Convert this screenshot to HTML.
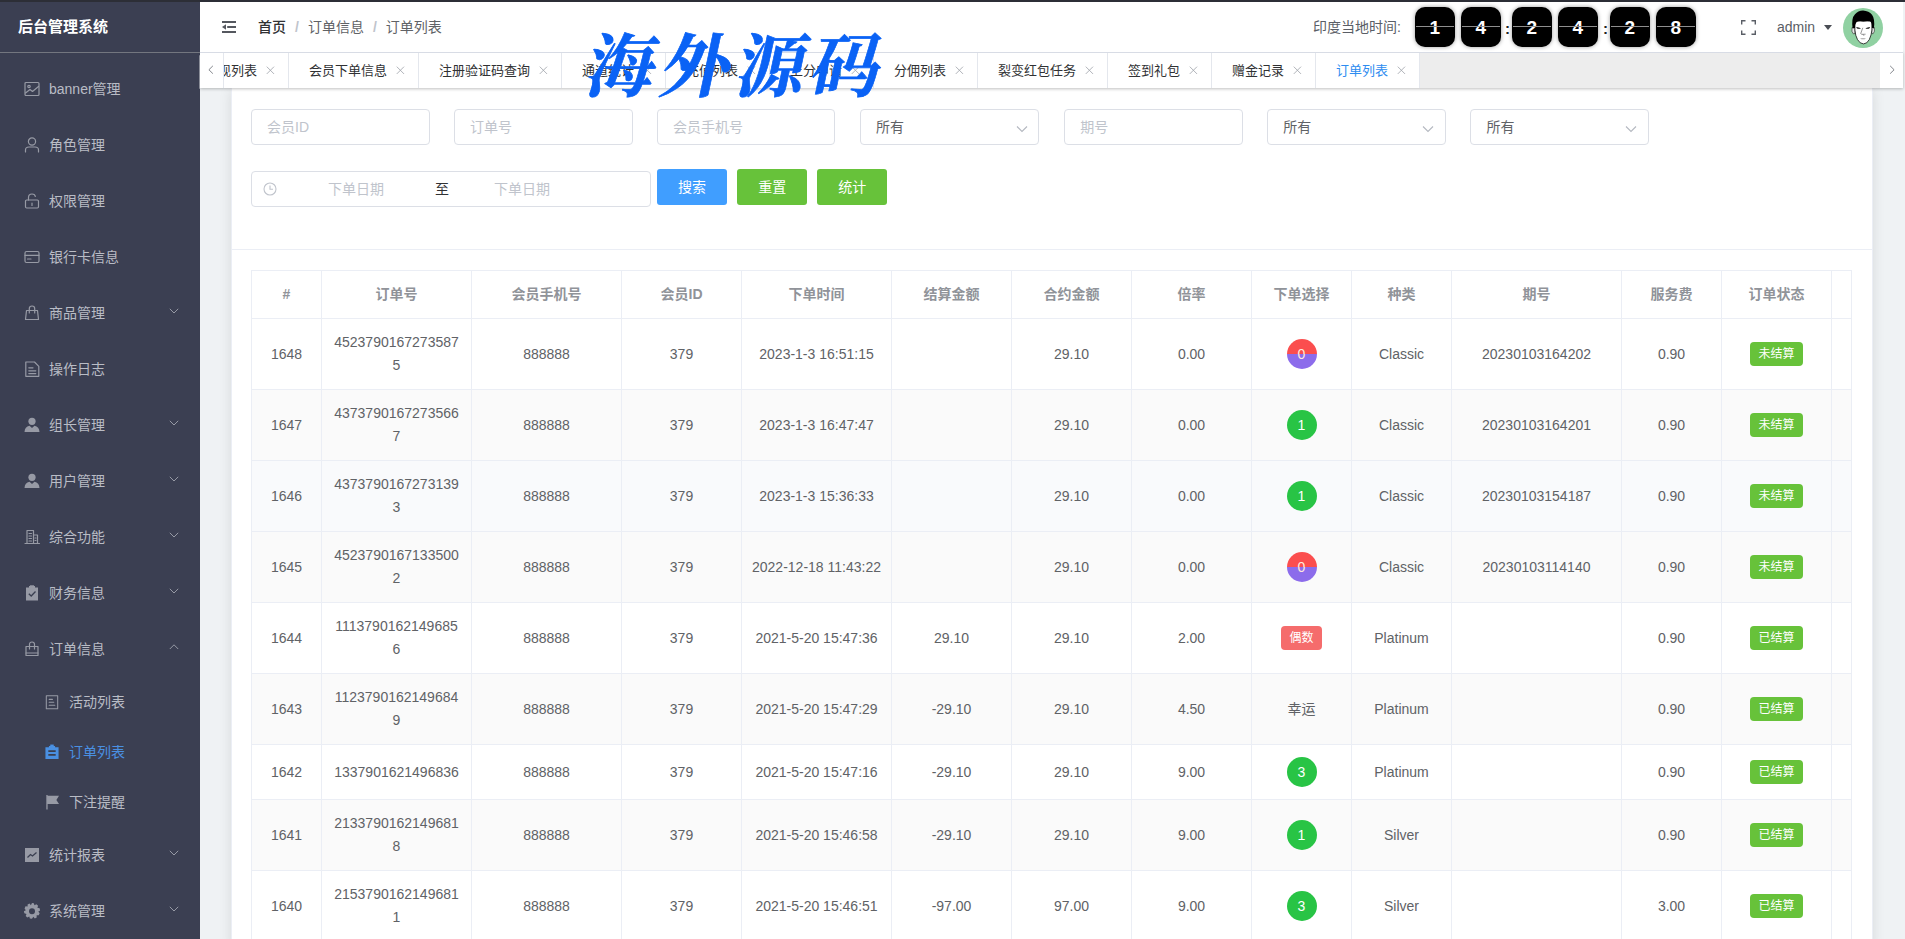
<!DOCTYPE html>
<html lang="zh-CN">
<head>
<meta charset="utf-8">
<title>后台管理系统</title>
<style>
*{box-sizing:border-box;margin:0;padding:0}
html,body{width:1905px;height:939px;overflow:hidden;background:#eff2f4;
  font-family:"Liberation Sans","Noto Sans CJK SC",sans-serif;font-size:14px;color:#606266}
.abs{position:absolute}
#topline{left:0;top:0;width:1905px;height:2px;background:#2c2e36;z-index:50}
/* sidebar */
#side{left:0;top:0;width:200px;height:939px;background:#3b3f52;z-index:10;overflow:hidden}
#logo{left:0;top:2px;width:200px;height:51px;border-bottom:1px solid #73767f;color:#fff;font-weight:bold;font-size:15px;line-height:49px;padding-left:18px}
#sthumb{left:198.5px;top:55px;width:2px;height:34px;background:#8b8e99;border-radius:1px}
.mi{position:absolute;left:0;width:200px;height:56px;line-height:56px;color:#b9bcc5;font-size:14px}
.mi .t{position:absolute;left:49px;top:0;white-space:nowrap}
.mi svg.ic{position:absolute;left:24px;top:20px;width:16px;height:16px;color:#979aa5;overflow:visible}
.mi svg.ar{position:absolute;left:169px;top:21px;width:10px;height:10px;color:#979aa5}
.mi.sub{height:50px;line-height:50px}
.mi.sub .t{left:69px}
.mi.sub svg.ic{left:45px;top:18px;width:14px;height:14px}
.mi.act{color:#4a90e2}
.mi.act svg.ic{color:#4a90e2}
/* header */
#head{left:200px;top:2px;width:1703px;height:50px;background:#fff;z-index:5}
#ham{position:absolute;left:22px;top:18.8px;width:14px;height:12px}
#bc{position:absolute;left:58px;top:0;line-height:50px;font-size:14px;white-space:nowrap;color:#606266}
#bc b{color:#303133;font-weight:500}
#bc em{font-style:normal;color:#c0c4cc;margin:0 9px;font-weight:bold}
#tl{position:absolute;left:1113px;top:0;line-height:50px;font-size:14px;color:#5a5e66;white-space:nowrap}
.dg{position:absolute;top:4.6px;width:40.5px;height:40.5px;border-radius:10px;background:#000;color:#fff;font-size:19px;font-weight:bold;text-align:center;line-height:42.5px;box-shadow:0 0 4px rgba(0,0,0,.4)}
.dg:after{content:"";position:absolute;left:1px;right:1px;top:19.4px;height:1px;background:rgba(150,150,150,.95)}
.cl{position:absolute;top:1.5px;line-height:50px;font-size:15px;font-weight:bold;color:#222;width:8px;text-align:center}
#fs{position:absolute;left:1541px;top:18px;width:15px;height:15px}
#adm{position:absolute;left:1577px;top:0;line-height:50px;font-size:14px;color:#5a5e66}
#caret{position:absolute;left:1624px;top:23px;width:0;height:0;border-left:4.5px solid transparent;border-right:4.5px solid transparent;border-top:5px solid #4a4d55}
#ava{position:absolute;left:1643px;top:6px;width:40px;height:40px}
/* tabs */
#tabs{left:200px;top:52px;width:1703px;height:36px;background:#ededed;border-top:1px solid #d8dce5;box-shadow:0 1px 3px rgba(0,0,0,.25);z-index:4;overflow:hidden}
.tab{position:absolute;top:0;height:35px;line-height:35px;background:#fff;border-right:1px solid #e4e7ed;font-size:13px;color:#303133;white-space:nowrap;padding-left:20px}
.tab svg.x{position:absolute;right:13px;top:13px;width:8.8px;height:8.6px;color:#a3a6ad}
.tab.on{color:#2d8cf0}
#tl-l{position:absolute;left:0;top:0;width:24px;height:35px;background:#fff;border-right:1px solid #e4e7ed}
#tl-l svg{position:absolute;left:8px;top:12.3px;width:6px;height:9.5px}
#tl-r{position:absolute;left:1680px;top:0;width:23px;height:35px;background:#fff}
#tl-r svg{position:absolute;left:9px;top:12.3px;width:6px;height:9.5px}
/* watermark */
#wm{position:absolute;left:588px;top:22.5px;z-index:60;color:#0a62f5;font-family:"Liberation Serif","Noto Serif CJK SC",serif;font-weight:700;font-size:69px;line-height:90px;white-space:nowrap;transform:skewX(-12deg);letter-spacing:6px;-webkit-text-stroke:0.7px #0a62f5}
/* main */
#card{left:231px;top:88px;width:1641.5px;box-shadow:0 2px 12px rgba(0,0,0,.1);height:860px;background:#fff;z-index:1;border-left:1px solid #ebeef5;border-right:1px solid #ebeef5}
.inp{position:absolute;height:36px;border:1px solid #dcdfe6;border-radius:4px;background:#fff;line-height:34px;padding-left:15px;font-size:14px;color:#c0c4cc;white-space:nowrap}
.inp.sel{color:#606266}
.inp .car{position:absolute;right:10.5px;top:13px;width:12px;height:12px}
#dr{position:absolute;left:19px;top:83px;width:400px;height:36px;border:1px solid #dcdfe6;border-radius:4px;background:#fff;font-size:14px}
#dr #clk{position:absolute;left:10.5px;top:9.5px;width:14px;height:14px}
#dr .ph{position:absolute;top:0;line-height:34px;color:#c0c4cc}
#dr .to{position:absolute;left:183px;top:0;line-height:34px;color:#303133}
.btn{position:absolute;top:81px;height:36px;width:70px;border-radius:3px;color:#fff;font-size:14px;text-align:center;line-height:36px}
#hr{position:absolute;left:0;top:161px;width:1640px;height:1px;background:#ebeef5}
/* table */
#tb{position:absolute;left:19px;top:182px;width:1601px;table-layout:fixed;border-collapse:separate;border-spacing:0;border-left:1px solid #ebeef5;border-top:1px solid #ebeef5;font-size:14px;color:#606266}
#tb th,#tb td{border-right:1px solid #ebeef5;border-bottom:1px solid #ebeef5;text-align:center;vertical-align:middle;padding:0}
#tb th{height:48px;padding-bottom:2px;color:#909399;font-weight:bold;font-size:14px;background:#fff}
#tb td{padding:12px 0}
#tb .c{padding:0 10px;line-height:23px;word-break:break-all}
#tb tr.st td{background:#fafafa}
#tb tr.hv td{background:#f9fafc}
.cir{display:block;margin:0 auto;width:30px;height:30px;border-radius:50%;color:#fff;font-size:14px;line-height:30px;text-align:center}
.cir.g{background:#28c445}
.cir.rv{background:linear-gradient(180deg,#fb4e4e 0,#fb4e4e 50%,#8c6ceb 50%,#8c6ceb 100%);color:#ffe9dc}
.tag{display:inline-block;height:24px;line-height:22px;padding:0 7.8px;border-radius:4px;font-size:12px;color:#fff;border:1px solid transparent;vertical-align:middle}
.tag.grn{background:#67c23a}
.tag.red{background:#f56c6c}

#tb th .hc{position:relative;top:-0.6px}

</style>
</head>
<body>
<div id="topline" class="abs"></div>

<div id="side" class="abs">
  <div id="logo" class="abs">后台管理系统</div>
  <div id="sthumb" class="abs"></div>
  <div class="mi" style="top:61px"><svg class="ic" viewBox="0 0 16 16" ><rect x="1" y="1.5" width="14" height="13" rx="1" fill="none" stroke="currentColor" stroke-width="1.2" stroke-linejoin="round" stroke-linecap="round"/><circle cx="5" cy="5.5" r="1.2" fill="none" stroke="currentColor" stroke-width="1.2" stroke-linejoin="round" stroke-linecap="round"/><path d="M1.5 12 L6 8.5 L8.5 10.5 L14.5 5.5" fill="none" stroke="currentColor" stroke-width="1.2" stroke-linejoin="round" stroke-linecap="round"/></svg><span class="t">banner管理</span></div>
  <div class="mi" style="top:117px"><svg class="ic" viewBox="0 0 16 16" ><circle cx="8" cy="4.5" r="3.6" fill="none" stroke="currentColor" stroke-width="1.2" stroke-linejoin="round" stroke-linecap="round"/><path d="M1.5 15 V13 Q1.5 10 5 10 H11 Q14.5 10 14.5 13 V15" fill="none" stroke="currentColor" stroke-width="1.2" stroke-linejoin="round" stroke-linecap="round"/></svg><span class="t">角色管理</span></div>
  <div class="mi" style="top:173px"><svg class="ic" viewBox="0 0 16 16" ><rect x="1.5" y="7" width="13" height="8" rx="1.2" fill="none" stroke="currentColor" stroke-width="1.2" stroke-linejoin="round" stroke-linecap="round"/><path d="M4.5 7 V4.5 Q4.5 1 8 1 Q11 1 11.3 3.5" fill="none" stroke="currentColor" stroke-width="1.2" stroke-linejoin="round" stroke-linecap="round"/><path d="M8 10 V12.5" fill="none" stroke="currentColor" stroke-width="1.2" stroke-linejoin="round" stroke-linecap="round"/></svg><span class="t">权限管理</span></div>
  <div class="mi" style="top:229px"><svg class="ic" viewBox="0 0 16 16" ><rect x="1" y="2.5" width="14" height="11" rx="1.5" fill="none" stroke="currentColor" stroke-width="1.2" stroke-linejoin="round" stroke-linecap="round"/><path d="M1 6.3 H15 M3.5 10 H7" fill="none" stroke="currentColor" stroke-width="1.2" stroke-linejoin="round" stroke-linecap="round"/></svg><span class="t">银行卡信息</span></div>
  <div class="mi" style="top:285px"><svg class="ic" viewBox="0 0 16 16" ><path d="M2.5 5.5 H13.5 L14.5 14.5 H1.5 Z" fill="none" stroke="currentColor" stroke-width="1.2" stroke-linejoin="round" stroke-linecap="round"/><path d="M5.3 8 V3.5 Q5.3 1 8 1 Q10.7 1 10.7 3.5 V8" fill="none" stroke="currentColor" stroke-width="1.2" stroke-linejoin="round" stroke-linecap="round"/></svg><span class="t">商品管理</span><svg class="ar" viewBox="0 0 10 10"><path d="M0.8 2.8 L5 7 L9.2 2.8" fill="none" stroke="currentColor" stroke-width="1"/></svg></div>
  <div class="mi" style="top:341px"><svg class="ic" viewBox="0 0 16 16" ><path d="M1.8 1 H10.5 L14.8 5.3 V15.3 H1.8 Z" fill="none" stroke="currentColor" stroke-width="1.2" stroke-linejoin="round" stroke-linecap="round"/><path d="M4.8 6.8 H9 M4.8 9.8 H11.8 M4.8 12.6 H11.8" fill="none" stroke="currentColor" stroke-width="1.2" stroke-linejoin="round" stroke-linecap="round"/></svg><span class="t">操作日志</span></div>
  <div class="mi" style="top:397px"><svg class="ic" viewBox="0 0 16 16" ><circle cx="8" cy="4.3" r="3.6" fill="currentColor"/><path d="M0.5 15 Q0.8 9.5 5.5 8.8 L8 11 L10.5 8.8 Q15.2 9.5 15.5 15 Z" fill="currentColor"/></svg><span class="t">组长管理</span><svg class="ar" viewBox="0 0 10 10"><path d="M0.8 2.8 L5 7 L9.2 2.8" fill="none" stroke="currentColor" stroke-width="1"/></svg></div>
  <div class="mi" style="top:453px"><svg class="ic" viewBox="0 0 16 16" ><circle cx="8" cy="4.3" r="3.6" fill="currentColor"/><path d="M0.5 15 Q0.8 9.5 5.5 8.8 L8 11 L10.5 8.8 Q15.2 9.5 15.5 15 Z" fill="currentColor"/></svg><span class="t">用户管理</span><svg class="ar" viewBox="0 0 10 10"><path d="M0.8 2.8 L5 7 L9.2 2.8" fill="none" stroke="currentColor" stroke-width="1"/></svg></div>
  <div class="mi" style="top:509px"><svg class="ic" viewBox="0 0 16 16" ><path d="M3 14.5 V1.5 H9.5 V14.5 M9.5 6 H13.5 V14.5 M1 14.5 H15.5" fill="none" stroke="currentColor" stroke-width="1.2" stroke-linejoin="round" stroke-linecap="round"/><path d="M5 4.5 H7.5 M5 7 H7.5 M5 9.5 H7.5 M5 12 H7.5 M11 9 H12 M11 11.5 H12" fill="none" stroke="currentColor" stroke-width="1.2" stroke-linejoin="round" stroke-linecap="round"/></svg><span class="t">综合功能</span><svg class="ar" viewBox="0 0 10 10"><path d="M0.8 2.8 L5 7 L9.2 2.8" fill="none" stroke="currentColor" stroke-width="1"/></svg></div>
  <div class="mi" style="top:565px"><svg class="ic" viewBox="0 0 16 16" ><path d="M2 2.5 H5 V1 H11 V2.5 H14 V15.5 H2 Z" fill="currentColor"/><rect x="6" y="0.3" width="4" height="2" fill="currentColor"/><path d="M4.8 8.8 L7.2 11 L11.5 6.5" fill="none" stroke="#3a3f51" stroke-width="1.3"/></svg><span class="t">财务信息</span><svg class="ar" viewBox="0 0 10 10"><path d="M0.8 2.8 L5 7 L9.2 2.8" fill="none" stroke="currentColor" stroke-width="1"/></svg></div>
  <div class="mi" style="top:621px"><svg class="ic" viewBox="0 0 16 16" ><path d="M2 5.5 H14 V14.5 H2 Z" fill="none" stroke="currentColor" stroke-width="1.2" stroke-linejoin="round" stroke-linecap="round"/><path d="M5.5 8 V3.3 Q5.5 1 8 1 Q10.5 1 10.5 3.3 V8 M2 12 H14" fill="none" stroke="currentColor" stroke-width="1.2" stroke-linejoin="round" stroke-linecap="round"/></svg><span class="t">订单信息</span><svg class="ar" viewBox="0 0 10 10"><path d="M0.8 7 L5 2.8 L9.2 7" fill="none" stroke="currentColor" stroke-width="1"/></svg></div>
  <div class="mi sub" style="top:677px"><svg class="ic" viewBox="0 0 16 16" ><path d="M1.5 0.8 H14.5 V15.8 H1.5 Z" fill="none" stroke="currentColor" stroke-width="1.2" stroke-linejoin="round" stroke-linecap="round"/><path d="M4.8 5 H8.5 M4.8 8.3 H10 M4.8 11.6 H11.2" fill="none" stroke="currentColor" stroke-width="1.2" stroke-linejoin="round" stroke-linecap="round"/></svg><span class="t">活动列表</span></div>
  <div class="mi sub act" style="top:727px"><svg class="ic" viewBox="0 0 16 16" ><path d="M0.5 2.5 H4.5 V1 H11.5 V2.5 H15.5 V16 H0.5 Z" fill="currentColor"/><rect x="6" y="-0.5" width="4" height="2.5" fill="currentColor"/><path d="M3.8 7 H12.2 M3.8 11.3 H12.2" stroke="#3a3f51" stroke-width="1.8"/></svg><span class="t">订单列表</span></div>
  <div class="mi sub" style="top:777px"><svg class="ic" viewBox="0 0 16 16" ><path d="M1.5 0 H3 V16.5 H1.5 Z M3 0.8 H16 L13 5.6 L16 10.4 H3 Z" fill="currentColor"/></svg><span class="t">下注提醒</span></div>
  <div class="mi" style="top:827px"><svg class="ic" viewBox="0 0 16 16" ><rect x="1" y="1" width="14" height="14" fill="currentColor"/><path d="M3.5 10.5 L6.5 7.5 L8.5 9 L12.5 5.5" fill="none" stroke="#3a3f51" stroke-width="1.3"/></svg><span class="t">统计报表</span><svg class="ar" viewBox="0 0 10 10"><path d="M0.8 2.8 L5 7 L9.2 2.8" fill="none" stroke="currentColor" stroke-width="1"/></svg></div>
  <div class="mi" style="top:883px"><svg class="ic" viewBox="0 0 16 16" ><path d="M8 0.8 L9.6 1 L10.2 2.8 L11.9 1.9 L13.4 3.2 L12.8 5 L14.8 5.4 L15.2 7.3 L13.6 8.3 L14.8 9.9 L14 11.7 L12.1 11.5 L12.2 13.5 L10.5 14.4 L9.2 13 L8 14.6 L6.1 14.5 L5.6 12.7 L3.8 13.5 L2.4 12.2 L3.1 10.4 L1.2 9.9 L0.8 8 L2.5 7.1 L1.4 5.5 L2.2 3.7 L4.1 3.9 L4.1 2 L5.8 1.2 L7 2.6 Z" fill="currentColor" transform="translate(-1,-0.8) scale(1.125)"/><circle cx="8" cy="8.2" r="3" fill="#3b3f52"/></svg><span class="t">系统管理</span><svg class="ar" viewBox="0 0 10 10"><path d="M0.8 2.8 L5 7 L9.2 2.8" fill="none" stroke="currentColor" stroke-width="1"/></svg></div>
</div>

<div id="head" class="abs">
  <svg id="ham" viewBox="0 0 14 12"><path d="M0 1 H14 M5.2 6 H14 M0 11 H14" stroke="#55585f" stroke-width="2" fill="none"/><path d="M0 6 L4 3.2 V8.8 Z" fill="#55585f"/></svg>
  <div id="bc"><b>首页</b><em>/</em><span>订单信息</span><em>/</em><span>订单列表</span></div>
  <div id="tl">印度当地时间:</div>
  <div class="dg" style="left:1214.5px">1</div><div class="dg" style="left:1260.5px">4</div><div class="dg" style="left:1311.5px">2</div><div class="dg" style="left:1357.5px">4</div><div class="dg" style="left:1409.5px">2</div><div class="dg" style="left:1455.5px">8</div><div class="cl" style="left:1303.5px">:</div><div class="cl" style="left:1401.5px">:</div>
  <svg id="fs" viewBox="0 0 15 15"><path d="M0.7 4.5 V0.7 H4.5 M10.5 0.7 H14.3 V4.5 M14.3 10.5 V14.3 H10.5 M4.5 14.3 H0.7 V10.5" fill="none" stroke="#5a5e66" stroke-width="1.4"/></svg>
  <div id="adm">admin</div>
  <div id="caret"></div>
  <svg id="ava" viewBox="0 0 40 40">
<circle cx="20" cy="20" r="20" fill="#90d1a2"/>
<path d="M9 19.5 Q8.3 24 10.3 25.8 L12 25.5 L12 19.5 Z M31.4 19.5 Q32 24 30.1 25.8 L28.8 25.5 L28.8 19.5 Z" fill="#e8e8e8" stroke="#222" stroke-width="0.6"/>
<path d="M11.9 13 L11.9 22 Q12.4 28 14.5 31.6 Q17 35.9 20.5 35.9 Q24 35.9 26.3 31.6 Q28.5 27 28.9 22 L28.9 13 Z" fill="#fff" stroke="#111" stroke-width="0.8"/>
<path d="M9.6 20.5 Q8.2 10 12 6.3 Q15 2.8 20 2.6 Q26 2.9 29 6.8 Q32.2 11 30.9 20.5 L28.9 19.8 Q29.3 15 27 13.2 Q23.5 12.4 20.3 13.6 Q16.5 12.4 13.6 14 Q11.8 16 12 20 Z" fill="#000"/>
<path d="M13.2 18.9 Q15.5 19 18 20.2 Q15.5 21.3 13.8 20.2 Z M27.1 18.9 Q24.8 19 22.4 20.2 Q24.8 21.3 26.5 20.2 Z" fill="#111"/>
<path d="M19.8 19.8 L17.7 25.6 Q18.5 26.6 20 26.3 L21 27.8 M20 26.3 L22.6 26.2" stroke="#444" stroke-width="0.55" fill="none"/>
<path d="M17 30.5 Q20 29.8 23 30.5 Q20 32.2 17 30.5 Z" fill="#9a9a9a"/>
</svg>
</div>

<div id="tabs" class="abs">
  <div class="tab" style="left:-15px;width:104px">提现列表<svg class="x" viewBox="0 0 9 9"><path d="M0.7 0.7 L8.3 8.3 M8.3 0.7 L0.7 8.3" stroke="currentColor" stroke-width="0.9" fill="none"/></svg></div>
  <div class="tab" style="left:89px;width:130px">会员下单信息<svg class="x" viewBox="0 0 9 9"><path d="M0.7 0.7 L8.3 8.3 M8.3 0.7 L0.7 8.3" stroke="currentColor" stroke-width="0.9" fill="none"/></svg></div>
  <div class="tab" style="left:219px;width:143px">注册验证码查询<svg class="x" viewBox="0 0 9 9"><path d="M0.7 0.7 L8.3 8.3 M8.3 0.7 L0.7 8.3" stroke="currentColor" stroke-width="0.9" fill="none"/></svg></div>
  <div class="tab" style="left:362px;width:104px">通道统计<svg class="x" viewBox="0 0 9 9"><path d="M0.7 0.7 L8.3 8.3 M8.3 0.7 L0.7 8.3" stroke="currentColor" stroke-width="0.9" fill="none"/></svg></div>
  <div class="tab" style="left:466px;width:104px">充值列表<svg class="x" viewBox="0 0 9 9"><path d="M0.7 0.7 L8.3 8.3 M8.3 0.7 L0.7 8.3" stroke="currentColor" stroke-width="0.9" fill="none"/></svg></div>
  <div class="tab" style="left:570px;width:104px">上分申请<svg class="x" viewBox="0 0 9 9"><path d="M0.7 0.7 L8.3 8.3 M8.3 0.7 L0.7 8.3" stroke="currentColor" stroke-width="0.9" fill="none"/></svg></div>
  <div class="tab" style="left:674px;width:104px">分佣列表<svg class="x" viewBox="0 0 9 9"><path d="M0.7 0.7 L8.3 8.3 M8.3 0.7 L0.7 8.3" stroke="currentColor" stroke-width="0.9" fill="none"/></svg></div>
  <div class="tab" style="left:778px;width:130px">裂变红包任务<svg class="x" viewBox="0 0 9 9"><path d="M0.7 0.7 L8.3 8.3 M8.3 0.7 L0.7 8.3" stroke="currentColor" stroke-width="0.9" fill="none"/></svg></div>
  <div class="tab" style="left:908px;width:104px">签到礼包<svg class="x" viewBox="0 0 9 9"><path d="M0.7 0.7 L8.3 8.3 M8.3 0.7 L0.7 8.3" stroke="currentColor" stroke-width="0.9" fill="none"/></svg></div>
  <div class="tab" style="left:1012px;width:104px">赠金记录<svg class="x" viewBox="0 0 9 9"><path d="M0.7 0.7 L8.3 8.3 M8.3 0.7 L0.7 8.3" stroke="currentColor" stroke-width="0.9" fill="none"/></svg></div>
  <div class="tab on" style="left:1116px;width:104px">订单列表<svg class="x" viewBox="0 0 9 9"><path d="M0.7 0.7 L8.3 8.3 M8.3 0.7 L0.7 8.3" stroke="currentColor" stroke-width="0.9" fill="none"/></svg></div>
  <div id="tl-l"><svg viewBox="0 0 8 12"><path d="M6.5 0.8 L1.2 6 L6.5 11.2" fill="none" stroke="#5a5e66" stroke-width="1"/></svg></div>
  <div id="tl-r"><svg viewBox="0 0 8 12"><path d="M1.5 0.8 L6.8 6 L1.5 11.2" fill="none" stroke="#5a5e66" stroke-width="1"/></svg></div>
</div>

<div id="wm">海外源码</div>

<div id="card" class="abs">
  <div class="inp" style="left:19.10px;top:21px;width:178.6px">会员ID</div>
  <div class="inp" style="left:222.10px;top:21px;width:178.6px">订单号</div>
  <div class="inp" style="left:424.90px;top:21px;width:178.6px">会员手机号</div>
  <div class="inp sel" style="left:628.10px;top:21px;width:179.4px">所有<svg class="car" viewBox="0 0 12 12"><path d="M1 3.5 L6 8.5 L11 3.5" fill="none" stroke="#b4b8c0" stroke-width="1.1"/></svg></div>
  <div class="inp" style="left:832.20px;top:21px;width:178.6px">期号</div>
  <div class="inp sel" style="left:1035.30px;top:21px;width:178.4px">所有<svg class="car" viewBox="0 0 12 12"><path d="M1 3.5 L6 8.5 L11 3.5" fill="none" stroke="#b4b8c0" stroke-width="1.1"/></svg></div>
  <div class="inp sel" style="left:1238.40px;top:21px;width:178.4px">所有<svg class="car" viewBox="0 0 12 12"><path d="M1 3.5 L6 8.5 L11 3.5" fill="none" stroke="#b4b8c0" stroke-width="1.1"/></svg></div>
  <div id="dr">
    <svg id="clk" viewBox="0 0 14 14"><circle cx="7" cy="7" r="6" fill="none" stroke="#c0c4cc" stroke-width="1.1"/><path d="M7 3.5 V7.3 H10" fill="none" stroke="#c0c4cc" stroke-width="1.1"/></svg>
    <span class="ph" style="left:76px">下单日期</span><span class="to">至</span><span class="ph" style="left:242px">下单日期</span>
  </div>
  <div class="btn" style="left:425px;background:#409eff">搜索</div>
  <div class="btn" style="left:505.2px;background:#67c23a">重置</div>
  <div class="btn" style="left:585.3px;background:#67c23a">统计</div>
  <div id="hr"></div>
  <table id="tb"><colgroup><col style="width:70px"><col style="width:150px"><col style="width:150px"><col style="width:120px"><col style="width:150px"><col style="width:120px"><col style="width:120px"><col style="width:120px"><col style="width:100px"><col style="width:100px"><col style="width:170px"><col style="width:100px"><col style="width:110px"><col style="width:20px"></colgroup>
<tr class="hd"><th>#</th><th><span class="hc">订单号</span></th><th><span class="hc">会员手机号</span></th><th><span class="hc">会员ID</span></th><th><span class="hc">下单时间</span></th><th><span class="hc">结算金额</span></th><th><span class="hc">合约金额</span></th><th><span class="hc">倍率</span></th><th><span class="hc">下单选择</span></th><th><span class="hc">种类</span></th><th><span class="hc">期号</span></th><th><span class="hc">服务费</span></th><th><span class="hc">订单状态</span></th><th></th></tr>
<tr class=""><td><div class="c">1648</div></td><td><div class="c">45237901672735875</div></td><td><div class="c">888888</div></td><td><div class="c">379</div></td><td><div class="c">2023-1-3 16:51:15</div></td><td><div class="c"></div></td><td><div class="c">29.10</div></td><td><div class="c">0.00</div></td><td><div class="c"><span class="cir rv">0</span></div></td><td><div class="c">Classic</div></td><td><div class="c">20230103164202</div></td><td><div class="c">0.90</div></td><td><div class="c"><span class="tag grn">未结算</span></div></td><td></td></tr>
<tr class="st"><td><div class="c">1647</div></td><td><div class="c">43737901672735667</div></td><td><div class="c">888888</div></td><td><div class="c">379</div></td><td><div class="c">2023-1-3 16:47:47</div></td><td><div class="c"></div></td><td><div class="c">29.10</div></td><td><div class="c">0.00</div></td><td><div class="c"><span class="cir g">1</span></div></td><td><div class="c">Classic</div></td><td><div class="c">20230103164201</div></td><td><div class="c">0.90</div></td><td><div class="c"><span class="tag grn">未结算</span></div></td><td></td></tr>
<tr class="hv"><td><div class="c">1646</div></td><td><div class="c">43737901672731393</div></td><td><div class="c">888888</div></td><td><div class="c">379</div></td><td><div class="c">2023-1-3 15:36:33</div></td><td><div class="c"></div></td><td><div class="c">29.10</div></td><td><div class="c">0.00</div></td><td><div class="c"><span class="cir g">1</span></div></td><td><div class="c">Classic</div></td><td><div class="c">20230103154187</div></td><td><div class="c">0.90</div></td><td><div class="c"><span class="tag grn">未结算</span></div></td><td></td></tr>
<tr class="st"><td><div class="c">1645</div></td><td><div class="c">45237901671335002</div></td><td><div class="c">888888</div></td><td><div class="c">379</div></td><td><div class="c">2022-12-18 11:43:22</div></td><td><div class="c"></div></td><td><div class="c">29.10</div></td><td><div class="c">0.00</div></td><td><div class="c"><span class="cir rv">0</span></div></td><td><div class="c">Classic</div></td><td><div class="c">20230103114140</div></td><td><div class="c">0.90</div></td><td><div class="c"><span class="tag grn">未结算</span></div></td><td></td></tr>
<tr class=""><td><div class="c">1644</div></td><td><div class="c">11137901621496856</div></td><td><div class="c">888888</div></td><td><div class="c">379</div></td><td><div class="c">2021-5-20 15:47:36</div></td><td><div class="c">29.10</div></td><td><div class="c">29.10</div></td><td><div class="c">2.00</div></td><td><div class="c"><span class="tag red">偶数</span></div></td><td><div class="c">Platinum</div></td><td><div class="c"></div></td><td><div class="c">0.90</div></td><td><div class="c"><span class="tag grn">已结算</span></div></td><td></td></tr>
<tr class="st"><td><div class="c">1643</div></td><td><div class="c">11237901621496849</div></td><td><div class="c">888888</div></td><td><div class="c">379</div></td><td><div class="c">2021-5-20 15:47:29</div></td><td><div class="c">-29.10</div></td><td><div class="c">29.10</div></td><td><div class="c">4.50</div></td><td><div class="c">幸运</div></td><td><div class="c">Platinum</div></td><td><div class="c"></div></td><td><div class="c">0.90</div></td><td><div class="c"><span class="tag grn">已结算</span></div></td><td></td></tr>
<tr class=""><td><div class="c">1642</div></td><td><div class="c">1337901621496836</div></td><td><div class="c">888888</div></td><td><div class="c">379</div></td><td><div class="c">2021-5-20 15:47:16</div></td><td><div class="c">-29.10</div></td><td><div class="c">29.10</div></td><td><div class="c">9.00</div></td><td><div class="c"><span class="cir g">3</span></div></td><td><div class="c">Platinum</div></td><td><div class="c"></div></td><td><div class="c">0.90</div></td><td><div class="c"><span class="tag grn">已结算</span></div></td><td></td></tr>
<tr class="st"><td><div class="c">1641</div></td><td><div class="c">21337901621496818</div></td><td><div class="c">888888</div></td><td><div class="c">379</div></td><td><div class="c">2021-5-20 15:46:58</div></td><td><div class="c">-29.10</div></td><td><div class="c">29.10</div></td><td><div class="c">9.00</div></td><td><div class="c"><span class="cir g">1</span></div></td><td><div class="c">Silver</div></td><td><div class="c"></div></td><td><div class="c">0.90</div></td><td><div class="c"><span class="tag grn">已结算</span></div></td><td></td></tr>
<tr class=""><td><div class="c">1640</div></td><td><div class="c">21537901621496811</div></td><td><div class="c">888888</div></td><td><div class="c">379</div></td><td><div class="c">2021-5-20 15:46:51</div></td><td><div class="c">-97.00</div></td><td><div class="c">97.00</div></td><td><div class="c">9.00</div></td><td><div class="c"><span class="cir g">3</span></div></td><td><div class="c">Silver</div></td><td><div class="c"></div></td><td><div class="c">3.00</div></td><td><div class="c"><span class="tag grn">已结算</span></div></td><td></td></tr>
</table>
</div>

</body>
</html>
